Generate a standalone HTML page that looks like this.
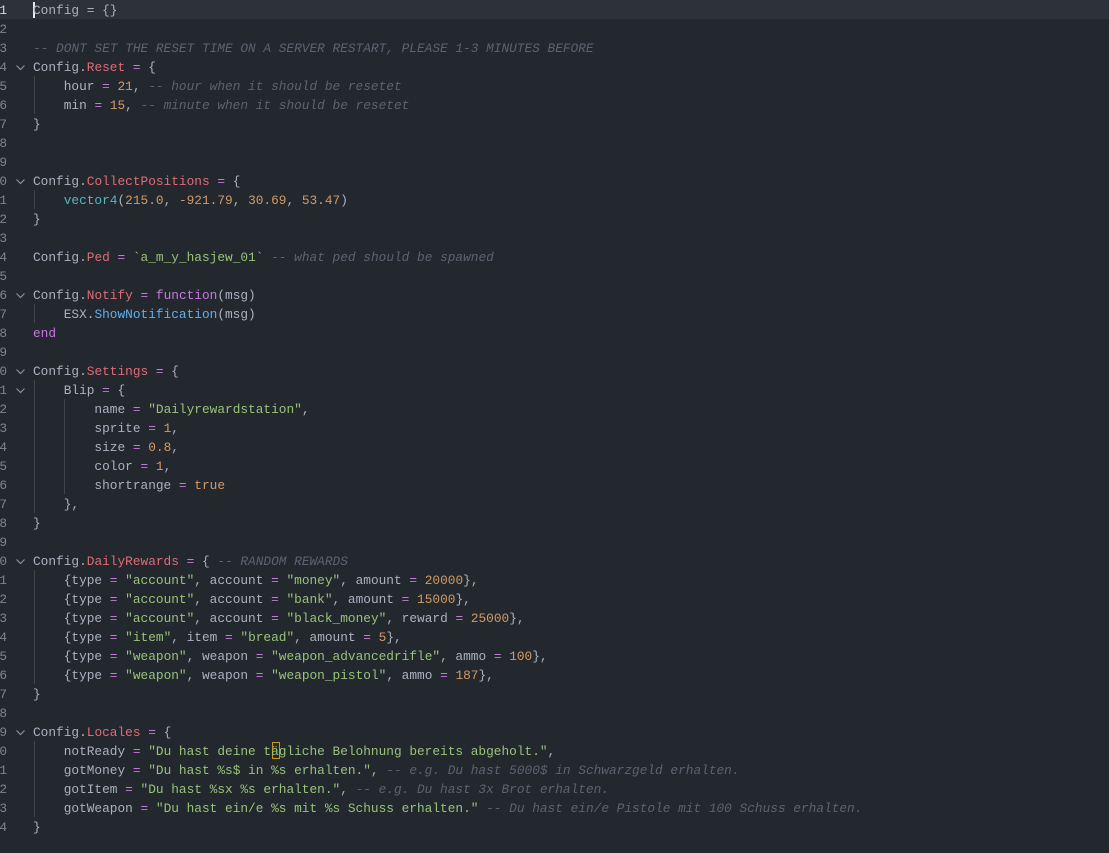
<!DOCTYPE html>
<html><head><meta charset="utf-8"><style>
html,body{margin:0;padding:0;background:#23272e;width:1109px;height:853px;overflow:hidden}
body{font-family:"Liberation Mono",monospace;font-size:12.8px;color:#abb2bf;position:relative}
.l{position:absolute;left:0;height:19px;line-height:19px;width:1109px;white-space:pre}
.n{position:absolute;left:-1px;width:8px;text-align:right;color:#7f848e}
.f{position:absolute;left:15px;top:0;width:14px;color:#8a919e;font-size:11px}
.c{position:absolute;left:33px}
.p{color:#e06c75}.o{color:#c678dd}.d{color:#d19a66}.s{color:#98c379}.m{color:#5c6370;font-style:italic}.b{color:#61afef}.y{color:#56b6c2}.k{color:#c678dd}
.g{position:absolute;width:1px;background:#3e434c}
</style></head><body>
<div style="position:absolute;left:0;top:0;width:1109px;height:19px;background:#2c313a"></div>
<div style="position:absolute;left:33px;top:2px;width:2px;height:16px;background:#e8e8e8"></div>
<div class="g" style="left:34px;top:76px;height:38px"></div>
<div class="g" style="left:34px;top:190px;height:19px"></div>
<div class="g" style="left:34px;top:304px;height:19px"></div>
<div class="g" style="left:34px;top:380px;height:133px"></div>
<div class="g" style="left:64px;top:399px;height:95px"></div>
<div class="g" style="left:34px;top:570px;height:114px"></div>
<div class="g" style="left:34px;top:741px;height:76px"></div>
<div style="position:absolute;left:272px;top:742px;width:8px;height:17px;border:1px solid #c89a12;box-sizing:border-box"></div>
<div id="code"></div>
<script>
var L=[
['1','','Config = {}'],
['2','',''],
['3','','<span class="m">-- DONT SET THE RESET TIME ON A SERVER RESTART, PLEASE 1-3 MINUTES BEFORE</span>'],
['4','v','Config.<span class="p">Reset</span> <span class="o">=</span> {'],
['5','','    hour <span class="o">=</span> <span class="d">21</span>, <span class="m">-- hour when it should be resetet</span>'],
['6','','    min <span class="o">=</span> <span class="d">15</span>, <span class="m">-- minute when it should be resetet</span>'],
['7','','}'],
['8','',''],['9','',''],
['0','v','Config.<span class="p">CollectPositions</span> <span class="o">=</span> {'],
['1','','    <span class="y">vector4</span>(<span class="d">215.0</span>, <span class="d">-921.79</span>, <span class="d">30.69</span>, <span class="d">53.47</span>)'],
['2','','}'],
['3','',''],
['4','','Config.<span class="p">Ped</span> <span class="o">=</span> <span class="s">`a_m_y_hasjew_01`</span> <span class="m">-- what ped should be spawned</span>'],
['5','',''],
['6','v','Config.<span class="p">Notify</span> <span class="o">=</span> <span class="k">function</span>(msg)'],
['7','','    ESX.<span class="b">ShowNotification</span>(msg)'],
['8','','<span class="k">end</span>'],
['9','',''],
['0','v','Config.<span class="p">Settings</span> <span class="o">=</span> {'],
['1','v','    Blip <span class="o">=</span> {'],
['2','','        name <span class="o">=</span> <span class="s">"Dailyrewardstation"</span>,'],
['3','','        sprite <span class="o">=</span> <span class="d">1</span>,'],
['4','','        size <span class="o">=</span> <span class="d">0.8</span>,'],
['5','','        color <span class="o">=</span> <span class="d">1</span>,'],
['6','','        shortrange <span class="o">=</span> <span class="d">true</span>'],
['7','','    },'],
['8','','}'],
['9','',''],
['0','v','Config.<span class="p">DailyRewards</span> <span class="o">=</span> { <span class="m">-- RANDOM REWARDS</span>'],
['1','','    {type <span class="o">=</span> <span class="s">"account"</span>, account <span class="o">=</span> <span class="s">"money"</span>, amount <span class="o">=</span> <span class="d">20000</span>},'],
['2','','    {type <span class="o">=</span> <span class="s">"account"</span>, account <span class="o">=</span> <span class="s">"bank"</span>, amount <span class="o">=</span> <span class="d">15000</span>},'],
['3','','    {type <span class="o">=</span> <span class="s">"account"</span>, account <span class="o">=</span> <span class="s">"black_money"</span>, reward <span class="o">=</span> <span class="d">25000</span>},'],
['4','','    {type <span class="o">=</span> <span class="s">"item"</span>, item <span class="o">=</span> <span class="s">"bread"</span>, amount <span class="o">=</span> <span class="d">5</span>},'],
['5','','    {type <span class="o">=</span> <span class="s">"weapon"</span>, weapon <span class="o">=</span> <span class="s">"weapon_advancedrifle"</span>, ammo <span class="o">=</span> <span class="d">100</span>},'],
['6','','    {type <span class="o">=</span> <span class="s">"weapon"</span>, weapon <span class="o">=</span> <span class="s">"weapon_pistol"</span>, ammo <span class="o">=</span> <span class="d">187</span>},'],
['7','','}'],
['8','',''],
['9','v','Config.<span class="p">Locales</span> <span class="o">=</span> {'],
['0','','    notReady <span class="o">=</span> <span class="s">"Du hast deine tägliche Belohnung bereits abgeholt."</span>,'],
['1','','    gotMoney <span class="o">=</span> <span class="s">"Du hast %s$ in %s erhalten."</span>, <span class="m">-- e.g. Du hast 5000$ in Schwarzgeld erhalten.</span>'],
['2','','    gotItem <span class="o">=</span> <span class="s">"Du hast %sx %s erhalten."</span>, <span class="m">-- e.g. Du hast 3x Brot erhalten.</span>'],
['3','','    gotWeapon <span class="o">=</span> <span class="s">"Du hast ein/e %s mit %s Schuss erhalten."</span> <span class="m">-- Du hast ein/e Pistole mit 100 Schuss erhalten.</span>'],
['4','','}']
];
var h='';
for(var i=0;i<L.length;i++){
 var t=i*19+0.5;
 var nc=i==0?' style="color:#d7dae0"':'';
 h+='<div class="l" style="top:'+t+'px"><span class="n"'+nc+'>'+L[i][0]+'</span>'+(L[i][1]?'<span class="f"><svg width="11" height="19" viewBox="0 0 11 19"><path d="M1.5 7.5 L5.5 11.5 L9.5 7.5" fill="none" stroke="#8a919e" stroke-width="1.2"/></svg></span>':'')+'<span class="c">'+L[i][2]+'</span></div>';
}
document.getElementById('code').innerHTML=h;
</script>
</body></html>
